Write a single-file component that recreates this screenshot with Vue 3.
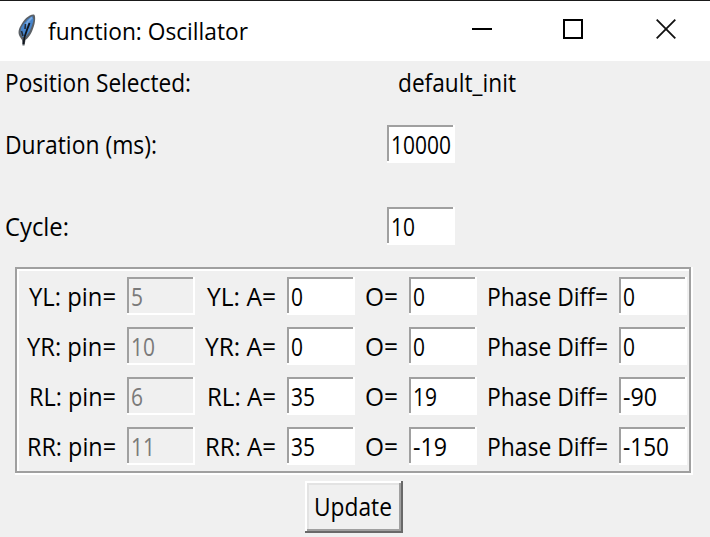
<script setup>
import { h } from 'vue'

const rows = [
  { name: 'YL', w: 87, aw: 69, pin: '5', a: '0', o: '0', phase: '0' },
  { name: 'YR', w: 89, aw: 71, pin: '10', a: '0', o: '0', phase: '0' },
  { name: 'RL', w: 87, aw: 69, pin: '6', a: '35', o: '19', phase: '-90' },
  { name: 'RR', w: 89, aw: 71, pin: '11', a: '35', o: '-19', phase: '-150' },
]

// Single line of text condensed to a fixed advance width.
const Label = (props) =>
  h('svg', { class: 'label', width: props.w, height: 38 }, [
    h('text', { x: 0, y: 28.5, textLength: props.w, lengthAdjust: 'spacingAndGlyphs' }, props.text),
  ])
Label.props = ['text', 'w']

const numberWidth = (v) => [...v].reduce((sum, c) => sum + (c === '-' ? 10 : 12), 0)

const Entry = (props) =>
  h('div', { class: ['entry', { disabled: props.disabled }] }, [
    h(Label, { text: props.value, w: numberWidth(props.value) }),
  ])
Entry.props = { value: String, disabled: Boolean }
</script>

<template>
  <div class="window">
    <header class="titlebar">
      <svg class="feather" width="20" height="34" viewBox="0 0 20 34">
        <path d="M17 1.5 C12 1 6.5 7 3.5 13 C1 17 1 21 3 24 L5 27 L5.5 32.5 L7.5 32.5 L8.5 27 C13 24 16 17 17.5 11 C18.5 7 18.5 2.5 17 1.5Z" fill="#5b6066" />
        <path d="M15.5 3 C11 5 6.5 10 4 15 L3.5 20 L5.5 24 L8 24 C12 21 15 14 16.5 7Z" fill="#4584cc" />
        <path d="M15 4.5 C12 7 10 10 8.5 13" fill="none" stroke="#79a9e0" stroke-width="2" />
        <path d="M12.5 10 C11 16 7 20 6.5 31" fill="none" stroke="#10151d" stroke-width="1.8" />
        <path d="M8.5 11 L8 16 M4.5 18 L6 23" fill="none" stroke="#222b38" stroke-width="1.6" />
      </svg>
      <Label class="title" text="function: Oscillator" :w="200" />
      <div class="controls">
        <svg width="20" height="20"><path d="M0 10H20" stroke="#000" stroke-width="2" /></svg>
        <svg width="20" height="20"><rect x="1" y="1" width="18" height="18" fill="none" stroke="#000" stroke-width="2" /></svg>
        <svg class="close" width="20" height="20"><path d="M.7 .7L19.3 19.3M19.3 .7L.7 19.3" stroke="#111" stroke-width="1.8" /></svg>
      </div>
    </header>

    <section class="settings">
      <Label text="Position Selected:" :w="186" />
      <Label class="value" text="default_init" :w="118" />
      <Label text="Duration (ms):" :w="152" />
      <Entry value="10000" />
      <Label text="Cycle:" :w="64" />
      <Entry value="10" />
    </section>

    <section class="servos">
      <div v-for="r in rows" :key="r.name" class="servo">
        <Label :text="r.name + ': pin='" :w="r.w" />
        <Entry :value="r.pin" disabled />
        <Label :text="r.name + ': A='" :w="r.aw" />
        <Entry :value="r.a" />
        <Label text="O=" :w="33" />
        <Entry :value="r.o" />
        <Label text="Phase Diff=" :w="121" />
        <Entry :value="r.phase" />
      </div>
    </section>

    <button class="update"><Label text="Update" :w="78" /></button>
  </div>
</template>

<style>
body {
  margin: 0;
  background: #f0f0f0;
}
.label {
  display: block;
  overflow: visible;
  font-family: 'Open Sans', 'Noto Sans', sans-serif;
  font-size: 25px;
  fill: #000;
}
.entry {
  box-sizing: border-box;
  width: 68px;
  height: 38px;
  padding-left: 4px;
  background: #fff;
  box-shadow: inset -2px -2px #fff, inset 2px 2px #a0a0a0;
}
.entry.disabled {
  background: #f0f0f0;
}
.entry.disabled .label {
  fill: #7a7a7a;
}
</style>

<style scoped>
.window {
  box-sizing: border-box;
  width: 710px;
  height: 537px;
  overflow: hidden;
  background: #f0f0f0;
}
.titlebar {
  box-sizing: border-box;
  height: 61px;
  display: flex;
  align-items: flex-start;
  padding: 10px 34px 0 17px;
  border-top: 1px solid #1a1a1a;
  background: #fff;
}
.feather {
  margin-top: 2px;
}
.title {
  margin-left: 11px;
  font-size: 23px;
}
.controls {
  display: flex;
  gap: 71px;
  margin: 8px 0 0 auto;
}
.close {
  margin-left: 2px;
}
.settings {
  display: grid;
  grid-template-columns: 382px 1fr;
  grid-template-rows: 62px 82px 60px;
  padding: 2px 0 0 5px;
}
.value {
  margin-left: 11px;
}
.servos {
  box-sizing: border-box;
  width: 678px;
  height: 208px;
  margin-left: 15px;
  padding: 10px 6px 0 10px;
  display: flex;
  flex-direction: column;
  gap: 12px;
  box-shadow: inset 0 -2px #fff, inset -2px 0 #fff, inset 2px 2px #a0a0a0, inset -4px -4px #a0a0a0, inset 4px 4px #fff;
}
.servo {
  display: grid;
  grid-template-columns: 102px 68px 92px 68px 54px 68px 142px 68px;
  justify-items: end;
  width: 662px;
}
.servo > .label {
  margin-right: 11px;
}
.update {
  box-sizing: border-box;
  display: block;
  width: 98px;
  height: 52px;
  margin: 6px 0 0 305px;
  padding: 6px 0 8px 9px;
  border: 0;
  background: #f0f0f0;
  box-shadow: inset -2px -2px #696969, inset 2px 2px #fff, inset -4px -4px #a0a0a0, inset 4px 4px #e3e3e3;
}
</style>
